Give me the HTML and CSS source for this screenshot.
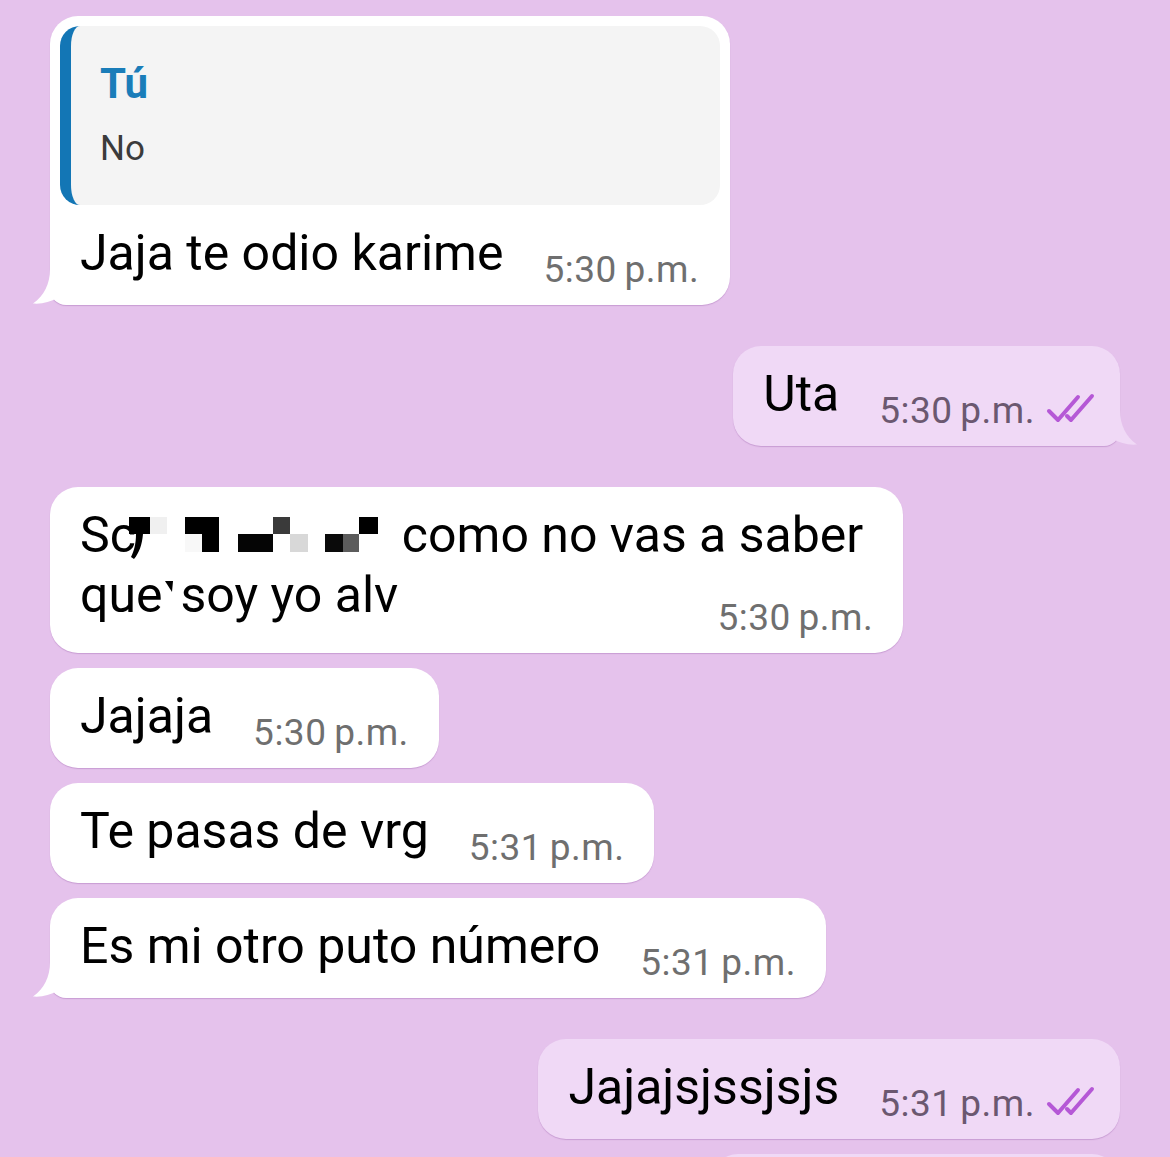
FILE: index.html
```html
<!DOCTYPE html>
<html lang="es">
<head>
<meta charset="utf-8">
<title>Chat</title>
<link rel="stylesheet" href="styles.css">
</head>
<body>
<div class="chat">

  <div class="bubble in has-tail quoted">
    <div class="quote">
      <div class="quote-name">Tú</div>
      <div class="quote-text">No</div>
    </div>
    <div class="line">
      <span class="text">Jaja te odio karime</span>
      <span class="meta"><span class="time">5:30 p.m.</span></span>
    </div>
    <svg class="tail tail-in" width="40" height="40" viewBox="0 0 40 40"><path d="M20 0 L20 4 C20 19 14 31 3 38.6 C12 39.4 20 37 28 32.5 L33 28 L33 0 Z"/></svg>
  </div>

  <div class="bubble out has-tail group-start">
    <div class="line">
      <span class="text">Uta</span>
      <span class="meta"><span class="time">5:30 p.m.</span>
        <svg class="ticks" width="50" height="32" viewBox="0 0 50 32"><path d="M4 18 L13 27 L33 4 M22 23 L26 27 L47 3"/></svg>
      </span>
    </div>
    <svg class="tail tail-out" width="40" height="40" viewBox="0 0 40 40"><path d="M20 0 L20 4 C20 19 14 31 3 38.6 C12 39.4 20 37 28 32.5 L33 28 L33 0 Z"/></svg>
  </div>

  <div class="bubble in group-start multi">
    <div class="text block">Sc<svg class="mosaic" width="250" height="44" viewBox="0 0 250 44">
        <rect x="0" y="0" width="21" height="17" fill="#000"/>
        <rect x="21" y="0" width="17" height="17" fill="#f0f0f0"/>
        <path d="M7 17 L14 17 C13 28 10 36 5 42 L2 40 C5 34 7 27 7 17 Z" fill="#000"/>
        <rect x="56" y="0" width="34" height="17" fill="#000"/>
        <rect x="73" y="17" width="17" height="18" fill="#000"/>
        <rect x="56" y="17" width="17" height="18" fill="#f8f8f8"/>
        <rect x="109" y="17" width="35" height="18" fill="#050505"/>
        <rect x="144" y="0" width="17" height="17" fill="#3a3a3a"/>
        <rect x="161" y="17" width="18" height="18" fill="#d8d8d8"/>
        <rect x="196" y="17" width="18" height="18" fill="#0a0a0a"/>
        <rect x="214" y="17" width="16" height="18" fill="#5c5c5c"/>
        <rect x="230" y="0" width="19" height="17" fill="#000"/>
      </svg>como no vas a saber<br>que<svg class="wedge" width="18" height="44" viewBox="0 0 18 44"><path d="M2 4 L10 4 L9 15 Z" fill="#000"/></svg>soy yo alv</div>
    <span class="meta end"><span class="time">5:30 p.m.</span></span>
  </div>

  <div class="bubble in">
    <div class="line">
      <span class="text">Jajaja</span>
      <span class="meta"><span class="time">5:30 p.m.</span></span>
    </div>
  </div>

  <div class="bubble in">
    <div class="line">
      <span class="text">Te pasas de vrg</span>
      <span class="meta"><span class="time">5:31 p.m.</span></span>
    </div>
  </div>

  <div class="bubble in has-tail">
    <div class="line">
      <span class="text">Es mi otro puto número</span>
      <span class="meta"><span class="time">5:31 p.m.</span></span>
    </div>
    <svg class="tail tail-in" width="40" height="40" viewBox="0 0 40 40"><path d="M20 0 L20 4 C20 19 14 31 3 38.6 C12 39.4 20 37 28 32.5 L33 28 L33 0 Z"/></svg>
  </div>

  <div class="bubble out group-start">
    <div class="line">
      <span class="text">Jajajsjssjsjs</span>
      <span class="meta"><span class="time">5:31 p.m.</span>
        <svg class="ticks" width="50" height="32" viewBox="0 0 50 32"><path d="M4 18 L13 27 L33 4 M22 23 L26 27 L47 3"/></svg>
      </span>
    </div>
  </div>

  <div class="bubble out partial"></div>

</div>
</body>
</html>
```

FILE: styles.css
```css
html, body {
  margin: 0;
  padding: 0;
}

body {
  width: 1170px;
  height: 1157px;
  overflow: hidden;
  background: #e5c2ec;
  font-family: Roboto, "Liberation Sans", Arial, sans-serif;
  -webkit-font-smoothing: antialiased;
}

.chat {
  display: flex;
  flex-direction: column;
  align-items: flex-start;
  gap: 15px;
  padding: 16px 50px 0 50px;
}

.bubble {
  position: relative;
  border-radius: 28px;
  padding: 18px 30px 15px 30px;
  box-shadow: 0 1px 1px rgba(150, 90, 165, 0.35);
}

.bubble.in {
  background: #ffffff;
}

.bubble.out {
  background: #f0d9f6;
  align-self: flex-end;
  padding-right: 25px;
}

.bubble.group-start {
  margin-top: 26px;
}

.bubble.in.has-tail {
  border-bottom-left-radius: 16px;
}

.bubble.out.has-tail {
  border-bottom-right-radius: 16px;
}

.tail {
  position: absolute;
  bottom: 0;
}

.tail-in {
  left: -20px;
  fill: #ffffff;
}

.tail-out {
  right: -20px;
  fill: #f0d9f6;
  transform: scaleX(-1);
}

.line {
  display: flex;
  align-items: flex-start;
}

.text {
  font-size: 50px;
  line-height: 60px;
  color: #000;
  white-space: nowrap;
}

.meta {
  display: flex;
  align-items: center;
  height: 40px;
  margin-top: 27px;
  margin-left: 40px;
  flex-shrink: 0;
}

.time {
  font-size: 37px;
  line-height: 40px;
  color: #6f6f6f;
  letter-spacing: 0.5px;
  word-spacing: -2px;
  white-space: nowrap;
}

.bubble.out .time {
  color: #6b5870;
}

.ticks {
  margin-left: 10px;
  margin-top: -4px;
  fill: none;
  stroke: #b558d6;
  stroke-width: 4;
  stroke-linecap: round;
  stroke-linejoin: round;
}

/* quoted reply */
.bubble.quoted {
  padding: 10px 10px 15px 10px;
}

.quote {
  width: 590px;
  background: #f4f4f4;
  border-left: 11px solid #1376b5;
  border-radius: 20px;
  padding: 34px 30px 34px 29px;
}

.quote-name {
  font-size: 42px;
  font-weight: 700;
  line-height: 48px;
  color: #1a7db9;
}

.quote-text {
  margin-top: 19px;
  font-size: 35px;
  line-height: 44px;
  color: #3b3b3b;
}

.bubble.quoted .line {
  margin-top: 18px;
  padding: 0 20px;
}

/* multi-line */
.bubble.multi {
  display: flex;
  flex-direction: column;
  padding-right: 40px;
}

.text.block {
  display: block;
}

.mosaic {
  vertical-align: -9px;
  margin-left: -7px;
  margin-right: 23px;
}

.wedge {
  vertical-align: -9px;
}

.meta.end {
  align-self: flex-end;
  margin-top: -27px;
  margin-left: 0;
  margin-right: -10px;
}

.bubble.partial {
  width: 410px;
  height: 80px;
  padding: 0;
}
```
